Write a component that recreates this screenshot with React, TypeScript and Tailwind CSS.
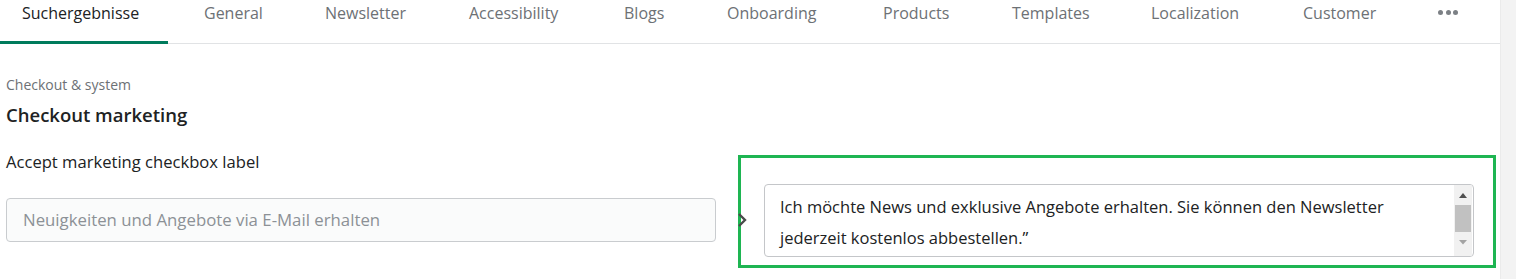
import React from "react";

const tabs: [string, number][] = [
  ["General", 121],
  ["Newsletter", 144],
  ["Accessibility", 155],
  ["Blogs", 103],
  ["Onboarding", 156],
  ["Products", 129],
  ["Templates", 139],
  ["Localization", 152],
  ["Customer", 135],
];

export default function App() {
  return (
    <div
      className="w-[1516px] h-[279px] flex bg-white overflow-hidden text-[#202223]"
      style={{ fontFamily: '"Open Sans", "Noto Sans", sans-serif' }}
    >
      <div className="w-[1500px] flex flex-col">
        {/* Tabs */}
        <div className="h-[44px] border-b border-[#e1e3e5] flex items-start">
          <div className="w-[168px] h-[44px] -mb-px pl-[22px] border-b-[3px] border-[#007b5c] text-[#202223] text-[16px] leading-[22px] pt-[2px] whitespace-nowrap">
            Suchergebnisse
          </div>
          <div className="w-[36px]" />
          {tabs.map(([t, w]) => (
            <div
              key={t}
              className="h-[43px] text-[#6d7175] text-[16px] leading-[22px] pt-[2px] whitespace-nowrap"
              style={{ width: w }}
            >
              {t}
            </div>
          ))}
          <div className="h-[43px] flex items-start pt-[10px] gap-[2.5px]">
            <span className="w-[5px] h-[5px] rounded-full bg-[#7c8085]" />
            <span className="w-[5px] h-[5px] rounded-full bg-[#7c8085]" />
            <span className="w-[5px] h-[5px] rounded-full bg-[#7c8085]" />
          </div>
        </div>

        {/* Content */}
        <div className="pl-[6px] pt-[32px]">
          <div className="text-[14px] leading-[18px] text-[#6d7175]">Checkout &amp; system</div>
          <div className="mt-[9px] text-[18.5px] leading-[24px] font-semibold text-[#202223]">
            Checkout marketing
          </div>
          <div className="flex items-start mt-[23px]">
            <div className="w-[710px] pt-[1px]">
              <div className="text-[16.6px] leading-[22px] text-[#202223]">
                Accept marketing checkbox label
              </div>
              <div className="mt-[25px] h-[44px] rounded-[4px] border border-[#c9cccf] bg-[#fafbfb] flex items-center pl-[16px] text-[16.8px] text-[#8c9196]">
                Neuigkeiten und Angebote via E-Mail erhalten
              </div>
            </div>
            <div className="relative ml-[22px] w-[758px] h-[113px] mt-[5px] border-[3px] border-[#1eb552] pl-[23px] pt-[26px]">
              <svg
                className="absolute left-[-4px] top-[55px]"
                width="10"
                height="14"
                viewBox="0 0 10 14"
              >
                <path d="M2 1 L8 7 L2 13" fill="none" stroke="#4a4a4a" strokeWidth="2.4" strokeLinejoin="miter" />
              </svg>
              <div className="w-[710px] h-[73px] rounded-[4px] border border-[#c4c6c9] bg-white flex overflow-hidden">
                <div className="flex-1 pl-[15px] pr-[30px] pt-[6px] text-[16.5px] leading-[31px] text-[#202223]">
                  Ich möchte News und exklusive Angebote erhalten. Sie können den Newsletter jederzeit
                  kostenlos abbestellen.”
                </div>
                <div className="w-[18px] mr-[1px] bg-[#f1f1f1] flex flex-col items-center">
                  <svg width="18" height="20" viewBox="0 0 18 20">
                    <path d="M5 13 L9 8 L13 13 Z" fill="#505050" />
                  </svg>
                  <div className="w-[16px] h-[27px] bg-[#c1c1c1]" />
                  <svg width="18" height="20" viewBox="0 0 18 20">
                    <path d="M5 8 L13 8 L9 12.5 Z" fill="#a3a3a3" />
                  </svg>
                </div>
              </div>
            </div>
          </div>
        </div>
      </div>
      <div className="w-[16px] h-full bg-[#f3f3f3] border-l border-[#ebebeb]" />
    </div>
  );
}
